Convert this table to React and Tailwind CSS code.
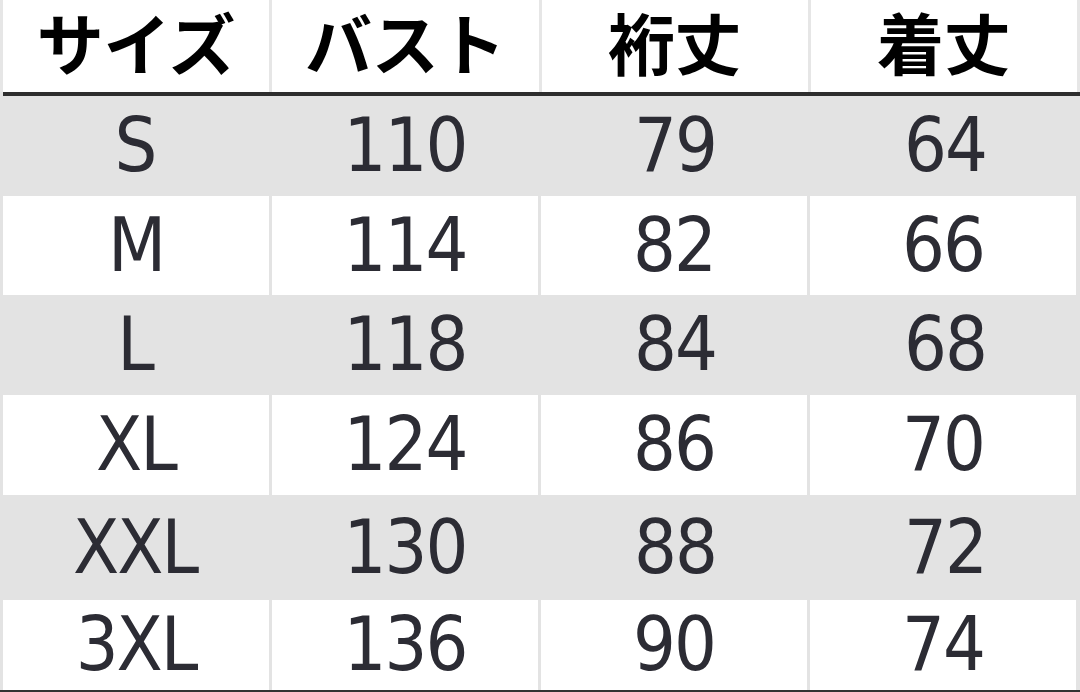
import React from "react";

const rows = [
  { s: "S", b: "110", y: "79", k: "64", h: "h-[100px]", gray: true },
  { s: "M", b: "114", y: "82", k: "66", h: "h-[99px]", gray: false },
  { s: "L", b: "118", y: "84", k: "68", h: "h-[100px]", gray: true },
  { s: "XL", b: "124", y: "86", k: "70", h: "h-[100px]", gray: false },
  { s: "XXL", b: "130", y: "88", k: "72", h: "h-[105px]", gray: true },
  { s: "3XL", b: "136", y: "90", k: "74", h: "h-[90px]", gray: false },
];

const numFont = { fontFamily: '"DejaVu Sans Condensed", "DejaVu Sans", sans-serif' };

function Cell({ children, gray }) {
  return (
    <div
      className={`flex items-center justify-center pb-[2px] text-[75px] tracking-[-2px] leading-[86px] text-[#2c2c34] ${gray ? "bg-[#e3e3e3]" : "bg-white"}`}
      style={numFont}
    >
      {children}
    </div>
  );
}

export default function App() {
  const headers = ["サイズ", "バスト", "裄丈", "着丈"];
  return (
    <div className="w-[1080px] h-[692px] bg-[#e3e3e3] flex flex-col overflow-hidden">
      <div className="grid grid-cols-4 gap-x-[3px] pl-[3px] pr-[3px] h-[92px] bg-[#e6e6e6]">
        {headers.map((t) => (
          <div
            key={t}
            className="bg-white flex items-center justify-center pb-[10px] text-[67px] font-bold leading-[80px] text-black"
            style={{ fontFamily: '"Noto Sans CJK JP", sans-serif' }}
          >
            {t}
          </div>
        ))}
      </div>
      <div className="h-[4px] ml-[3px] bg-[#2e2e2e]" />
      {rows.map((r) => (
        <div
          key={r.s}
          className={`grid grid-cols-4 ${r.h} ${r.gray ? "" : "gap-x-[3px] pl-[3px] pr-[4px]"}`}
        >
          <Cell gray={r.gray}>{r.s}</Cell>
          <Cell gray={r.gray}>{r.b}</Cell>
          <Cell gray={r.gray}>{r.y}</Cell>
          <Cell gray={r.gray}>{r.k}</Cell>
        </div>
      ))}
      <div className="h-[2px] bg-[#333333]" />
    </div>
  );
}
